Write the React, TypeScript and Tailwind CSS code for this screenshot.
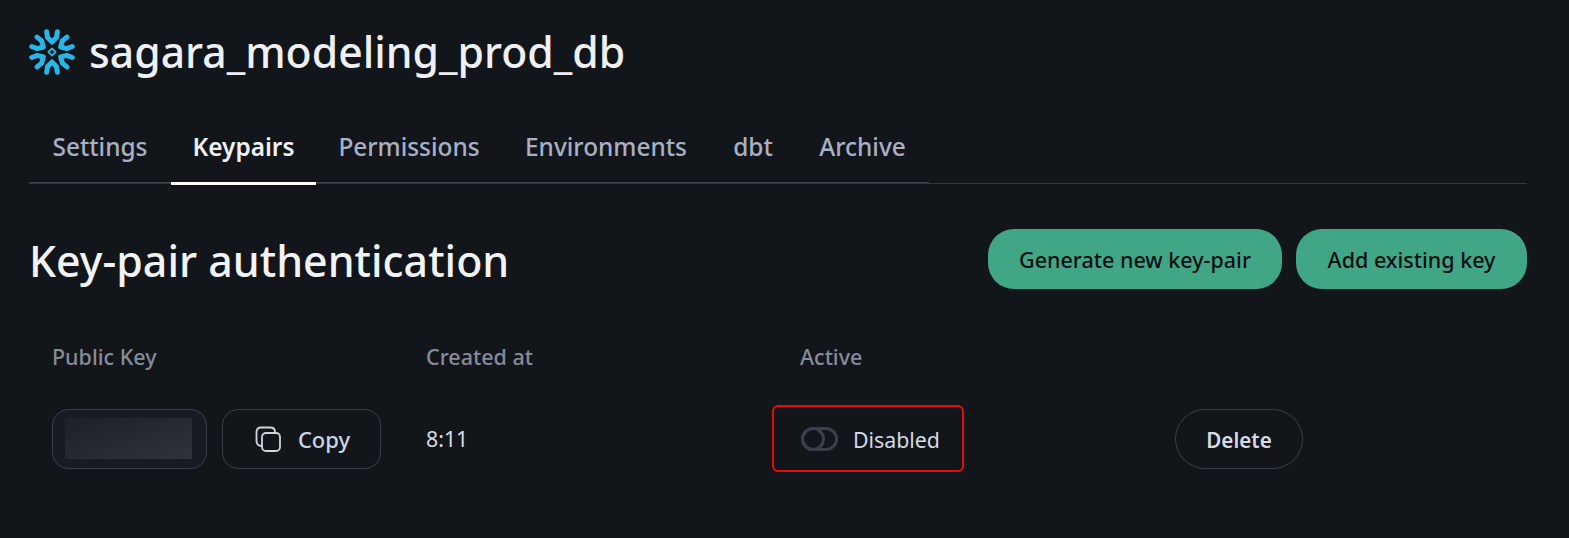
const tabs = [
  { name: "Settings", width: "w-[142px]" },
  { name: "Keypairs", width: "w-[145px]" },
  { name: "Permissions", width: "w-[186px]" },
  { name: "Environments", width: "w-[208px]" },
  { name: "dbt", width: "w-[86px]" },
  { name: "Archive", width: "w-[133px]" },
];

function SnowflakeLogo() {
  return (
    <svg width="46" height="46" viewBox="-23 -23 46 46" fill="none" stroke="#29b5e8" strokeWidth="5" strokeLinecap="round" strokeLinejoin="round">
      {[0, 60, 120, 180, 240, 300].map((deg) => (
        <path key={deg} transform={`rotate(${deg})`} d="M-5.4 -20.3 L-4.4 -14.5 L0 -10 M5.4 -20.3 L4.4 -14.5 L0 -10" />
      ))}
      <path d="M0 -3.6 L3.6 0 L0 3.6 L-3.6 0 Z" strokeWidth="1.8" />
    </svg>
  );
}

function CopyIcon() {
  return (
    <svg className="ml-[2px]" width="26" height="26" viewBox="0 0 26 26" fill="none" stroke="#d1d5db" strokeWidth="1.8" strokeLinecap="round" strokeLinejoin="round">
      <rect x="7" y="7" width="18" height="18" rx="4" />
      <path d="M7 20 C3 20 1.5 18 1.5 15 V6 C1.5 3 3 1.5 6 1.5 H15 C18 1.5 20 3 20 6" />
    </svg>
  );
}

export default function App() {
  return (
    <main className="min-h-[538px] bg-[#12161b] pl-[29px] pr-[42px] pt-[19px] font-['Noto_Sans',sans-serif]">
      <div className="flex items-center gap-[14px] h-[66px]">
        <SnowflakeLogo />
        <h1 className="text-[42.7px] leading-none font-medium text-[#eef0f3]">sagara_modeling_prod_db</h1>
      </div>

      <nav className="mt-[14px] h-[85px] border-b border-[#33363d]">
        <div className="flex h-full w-[900px] items-stretch border-b border-[#3f424a]">
          {tabs.map((tab) => (
            <div
              key={tab.name}
              className={
                tab.name === "Keypairs"
                  ? `${tab.width} -mb-[3px] flex items-center justify-center border-b-[3px] border-white pt-[13px] text-[24.4px] font-semibold text-[#eef0f3]`
                  : `${tab.width} -mb-[3px] flex items-center justify-center border-b-[3px] border-transparent pt-[13px] text-[24.4px] font-medium text-[#a9b0c3]`
              }
            >
              {tab.name}
            </div>
          ))}
        </div>
      </nav>

      <div className="mt-[45px] flex items-center justify-between">
        <h2 className="pt-[4px] text-[42.9px] leading-none font-medium text-[#f1f3f5]">Key-pair authentication</h2>
        <div className="flex gap-[14px]">
          <button className="h-[60px] w-[294px] rounded-[26px] bg-[#41a686] pt-[2px] text-[21.5px] font-medium text-[#0b0f12]">Generate new key-pair</button>
          <button className="h-[60px] w-[231px] rounded-[26px] bg-[#41a686] pt-[2px] text-[21.5px] font-medium text-[#0b0f12]">Add existing key</button>
        </div>
      </div>

      <div className="mt-[52px] ml-px grid grid-cols-[374px_374px_374px_1fr]">
        <div className="pl-[22px] text-[21.5px] font-medium text-[#868c99]">Public Key</div>
        <div className="pl-[22px] text-[21.5px] font-medium text-[#868c99]">Created at</div>
        <div className="pl-[22px] text-[21.5px] font-medium text-[#868c99]">Active</div>
        <div />

        <div className="mt-[36px] flex items-center gap-[15px] pl-[22px]">
          <div className="flex h-[60px] w-[155px] items-center rounded-[16px] border border-[#3a3e49] bg-[#171b24] pl-[12px]">
            <div className="mb-[2px] h-[41px] w-[127px] bg-linear-to-br from-[#1c2029] to-[#30333c]" />
          </div>
          <button className="flex h-[60px] w-[159px] items-center justify-center gap-[17px] rounded-[16px] border border-[#3a3e49] text-[22px] font-medium text-[#cbd5e1]">
            <CopyIcon />
            Copy
          </button>
        </div>
        <div className="mt-[36px] flex items-center pl-[22px] text-[21.3px] text-[#d5dae3]">8:11</div>
        <div className="relative mt-[36px] flex items-center gap-[15px] pl-[23px] text-[21.3px] text-[#d5dae3]">
          <span className="relative h-[24px] w-[37px] rounded-full border-[3px] border-[#3a3f4b]">
            <span className="absolute -left-[3px] -top-[3px] h-[24px] w-[24px] rounded-full border-[3px] border-[#3a3f4b]" />
          </span>
          <span className="pt-px">Disabled</span>
          <div className="absolute -left-[6px] top-[-4px] h-[67px] w-[192px] rounded-[6px] border-2 border-[#e50c0c]" />
        </div>
        <div className="mt-[36px] flex items-center pl-[23px]">
          <button className="h-[60px] w-[128px] rounded-full border border-[#3a3e49] pt-[2px] text-[20.6px] font-semibold text-[#d5dae3]">Delete</button>
        </div>
      </div>
    </main>
  );
}
